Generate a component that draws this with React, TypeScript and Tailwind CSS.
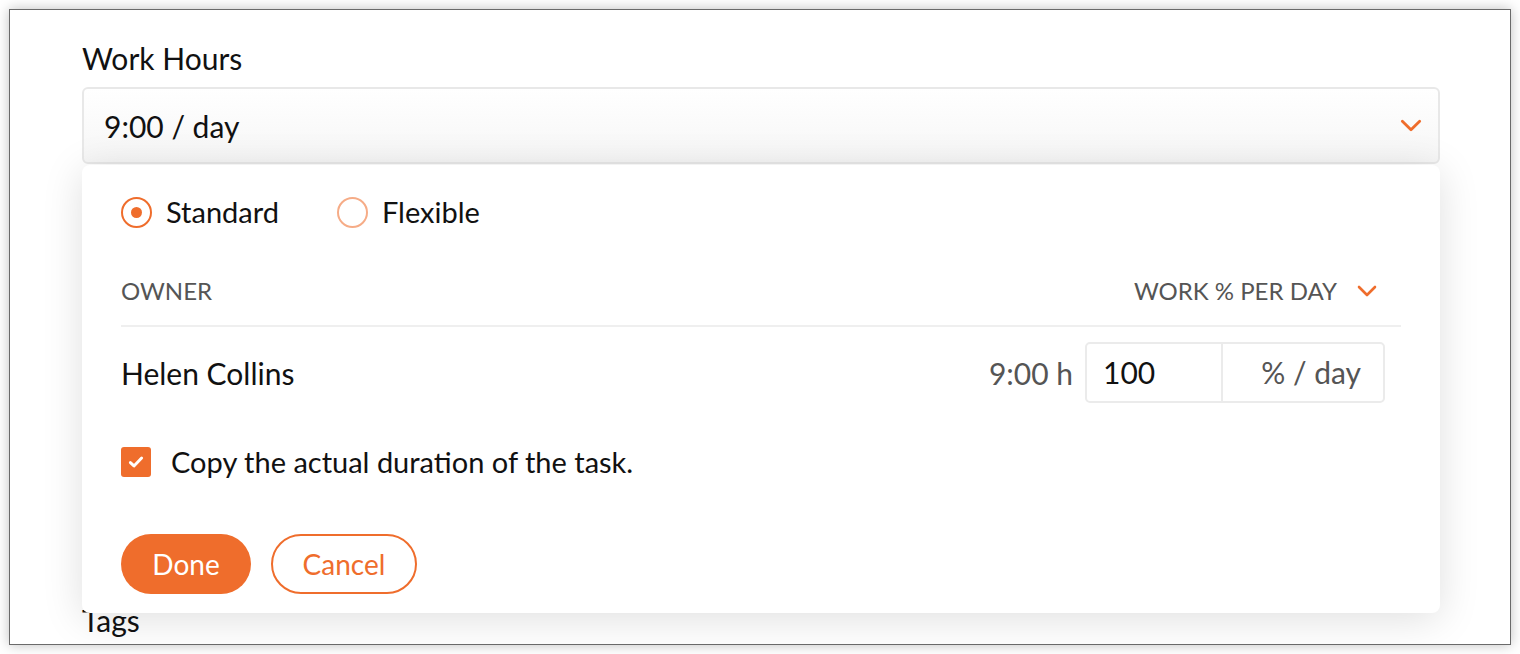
import { useState } from "react";

const font = { fontFamily: "Lato, 'Open Sans', sans-serif" };

function Chevron({ className }: { className?: string }) {
  return (
    <svg viewBox="0 0 20 12" className={className} fill="none">
      <path d="M2 2l8 8 8-8" stroke="#ef6d2c" strokeWidth="2.6" strokeLinecap="round" strokeLinejoin="round" />
    </svg>
  );
}

function Radio({ checked, label }: { checked: boolean; label: string }) {
  return (
    <label className="flex items-center gap-[14px] cursor-pointer">
      <span
        className={
          checked
            ? "w-[31px] h-[31px] rounded-full border-2 border-[#ef6d2c] flex items-center justify-center"
            : "w-[31px] h-[31px] rounded-full border-2 border-[#f6ac87] flex items-center justify-center"
        }
      >
        {checked && <span className="w-[11px] h-[11px] rounded-full bg-[#ef6d2c]" />}
      </span>
      <span className="text-[29px] leading-[36px] text-[#111]">{label}</span>
    </label>
  );
}

export default function App() {
  const [mode, setMode] = useState("standard");
  const [copy, setCopy] = useState(true);
  const [percent, setPercent] = useState("100");

  return (
    <div className="w-[1520px] h-[654px] bg-white p-[9px]" style={font}>
      <div className="relative h-[636px] border border-[#6a6a6a] bg-white overflow-hidden shadow-[0_0_12px_rgba(0,0,0,0.25)]">
        <div className="pl-[72px] pr-[70px] pt-[30px]">
          <div className="text-[30px] leading-[36px] text-[#111]">Work Hours</div>
          <div className="mt-[11px] h-[77px] rounded-[6px] border-2 border-[#e8e8e8] bg-gradient-to-b from-white to-[#f6f6f6] flex items-center justify-between pl-[20px] pr-[16px]">
            <span className="text-[30px] leading-[36px] text-[#111]">9:00 / day</span>
            <Chevron className="w-[22px] h-[13px]" />
          </div>
          <div className="mt-[438px] text-[30px] leading-[36px] text-[#111]">Tags</div>
        </div>

        {/* popup */}
        <div className="absolute left-[72px] right-[70px] top-[155px] h-[448px] bg-white rounded-[8px] shadow-[0_6px_40px_rgba(0,0,0,0.13)] pl-[39px] pr-[39px] pt-[29px]">
          <div className="flex items-center gap-[58px]">
            <div onClick={() => setMode("standard")}>
              <Radio checked={mode === "standard"} label="Standard" />
            </div>
            <div onClick={() => setMode("flexible")}>
              <Radio checked={mode === "flexible"} label="Flexible" />
            </div>
          </div>

          <div className="mt-[48px] pb-[21px] border-b-2 border-[#efefef] flex items-center justify-between text-[24px] leading-[26px] text-[#555]">
            <span>OWNER</span>
            <span className="flex items-center gap-[20px] pr-[24px]">
              WORK % PER DAY
              <Chevron className="w-[20px] h-[12px]" />
            </span>
          </div>

          <div className="pt-[15px] flex items-center justify-between pr-[16px]">
            <span className="text-[30px] leading-[36px] text-[#111]">Helen Collins</span>
            <div className="flex items-center gap-[12px]">
              <span className="text-[30px] leading-[36px] text-[#555]">9:00 h</span>
              <div className="flex h-[61px] rounded-[5px] border-2 border-[#ebebeb]">
                <input
                  value={percent}
                  onChange={(e) => setPercent(e.target.value)}
                  className="w-[134px] pl-[16px] text-[30px] text-[#111] outline-none bg-transparent"
                  style={font}
                />
                <div className="w-[162px] border-l-2 border-[#ebebeb] flex items-center justify-end pr-[22px] text-[30px] text-[#555]">
                  % / day
                </div>
              </div>
            </div>
          </div>

          <label className="mt-[41px] flex items-center gap-[20px] cursor-pointer" onClick={() => setCopy(!copy)}>
            <span className="w-[30px] h-[30px] rounded-[3px] bg-[#ef6d2c] flex items-center justify-center">
              {copy && (
                <svg viewBox="0 0 16 16" className="w-[18px] h-[18px]" fill="none">
                  <path d="M3 8.5l3.2 3L13 4.5" stroke="white" strokeWidth="2.6" strokeLinecap="round" strokeLinejoin="round" />
                </svg>
              )}
            </span>
            <span className="text-[29px] leading-[36px] text-[#111]">Copy the actual duration of the task.</span>
          </label>

          <div className="mt-[54px] flex items-center gap-[20px]">
            <button className="h-[60px] w-[130px] rounded-full bg-[#ef6d2c] text-white text-[28px]" style={font}>
              Done
            </button>
            <button className="h-[60px] w-[146px] rounded-full border-2 border-[#ef6d2c] text-[#ef6d2c] text-[28px] bg-white" style={font}>
              Cancel
            </button>
          </div>
        </div>
      </div>
    </div>
  );
}
